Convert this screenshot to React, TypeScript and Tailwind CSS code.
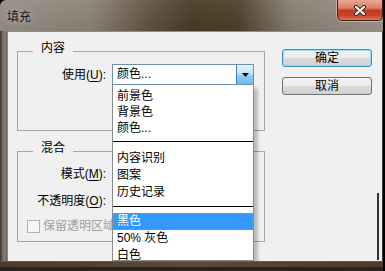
import React from "react";

const menuTop = ["前景色", "背景色", "颜色..."];
const menuMid = ["内容识别", "图案", "历史记录"];

function CloseButton() {
  return (
    <div className="absolute top-0 right-0 w-[46px] h-[21px] rounded-b-[5px] border border-t-0 border-[#4a1e12] shadow-[0_0_0_1px_rgba(255,255,255,0.35)] bg-[linear-gradient(180deg,#e8a898_0%,#dc8068_40%,#c23a1f_52%,#c5442a_78%,#dc7a5c_100%)] flex items-center justify-center">
      <svg width="14" height="11" viewBox="0 0 14 11">
        <path d="M3 2 L11 9 M11 2 L3 9" stroke="#3a2a28" strokeWidth="4.2" strokeLinecap="round" fill="none" />
        <path d="M3 2 L11 9 M11 2 L3 9" stroke="#ffffff" strokeWidth="2.2" strokeLinecap="round" fill="none" />
      </svg>
    </div>
  );
}

function GroupBox({ title, className, children }: { title: string; className: string; children: React.ReactNode }) {
  return (
    <div className={`relative border border-[#a6a6a6] ${className}`}>
      <span className="absolute left-[15px] -top-[12px] px-[8px] bg-[#f0f0f0] leading-[16px]">{title}</span>
      {children}
    </div>
  );
}

function Label({ text, hot }: { text: string; hot: string }) {
  return (
    <span className="w-[88px] text-right leading-[16px] whitespace-nowrap">
      {text}(<span className="underline underline-offset-2">{hot}</span>):
    </span>
  );
}

function DropList() {
  return (
    <div className="absolute top-[21px] left-0 w-[142px] h-[176px] z-10 bg-white border border-t-0 border-[#8a8a8a] shadow-[4px_3px_3px_rgba(0,0,0,0.22)] flex flex-col pt-[3px]">
      {menuTop.map((t) => (
        <div key={t} className="h-[16px] pl-[4px] leading-[16px] shrink-0">{t}</div>
      ))}
      <div className="h-px bg-black mt-[5px] mb-[8px] shrink-0" />
      {menuMid.map((t) => (
        <div key={t} className="h-[17px] pl-[4px] leading-[17px] shrink-0">{t}</div>
      ))}
      <div className="h-px bg-black mt-[5px] mb-[6px] shrink-0" />
      <div className="h-[17px] pl-[3px] leading-[15px] shrink-0 bg-[#3399ff] text-white border border-dotted border-[#c9894a]">黑色</div>
      <div className="h-[17px] pl-[4px] leading-[17px] shrink-0">50% 灰色</div>
      <div className="h-[17px] pl-[4px] leading-[17px] shrink-0">白色</div>
    </div>
  );
}

function Combo() {
  return (
    <div className="relative w-[142px] h-[21px]">
      <div className="w-full h-full flex border border-[#6f8db0] bg-white">
        <span className="flex-1 pl-[4px] leading-[19px]">颜色...</span>
        <div className="w-[17px] h-full border-l border-[#3c7fb1] bg-[linear-gradient(180deg,#e6f5fd_0%,#c4e5f8_45%,#8fcdf2_55%,#6cbbea_100%)] flex items-center justify-center">
          <svg width="7" height="4" viewBox="0 0 7 4">
            <path d="M0 0 H7 L3.5 4 Z" fill="#000" />
          </svg>
        </div>
      </div>
      <DropList />
    </div>
  );
}

function Button({ text, focused }: { text: string; focused?: boolean }) {
  return (
    <div
      className={`h-[18px] rounded-[3px] border flex items-center justify-center leading-[16px] bg-[linear-gradient(180deg,#f3f3f3_0%,#ebebeb_48%,#dcdcdc_52%,#d0d0d0_100%)] ${
        focused ? "border-[#3a93cf] shadow-[inset_0_0_0_1px_#8fdcfb]" : "border-[#707070]"
      }`}
    >
      {text}
    </div>
  );
}

export default function App() {
  return (
    <div className="w-[385px] h-[271px] bg-black overflow-hidden font-['Liberation_Sans','Noto_Sans_CJK_SC',sans-serif] text-[12px] text-black">
      <div className="w-[383px] h-full flex flex-col rounded-tl-[6px] overflow-hidden">
        {/* title bar */}
        <div className="relative h-[31px] shrink-0 bg-[linear-gradient(90deg,#968e84_0%,#8b8276_24%,#5f4f3d_40%,#4a3926_50%,#4f3e2b_62%,#877e72_76%,#9a948c_100%)]">
          <div className="absolute inset-0 bg-[linear-gradient(180deg,rgba(255,255,255,0.06),rgba(0,0,0,0.05))]" />
          <span className="relative block ml-[7px] pt-[10px] leading-[14px] text-[#141420] [text-shadow:0_0_6px_rgba(255,255,255,0.55)]">
            填充
          </span>
          <CloseButton />
        </div>

        <div className="flex flex-1 min-h-0">
          <div className="w-[7px] shrink-0 bg-[linear-gradient(90deg,#3d322a_0%,#6e655b_35%,#8a8378_70%,#5e5850_100%)]" />

          {/* client area */}
          <div className="relative flex-1 bg-[#f0f0f0] border-t border-l border-[#8c8c8c] overflow-hidden flex pl-[9px] pt-[17px]">
            <div className="w-[248px] mt-[2px] flex flex-col">
              <GroupBox title="内容" className="h-[80px] pt-[12px]">
                <div className="flex items-center">
                  <Label text="使用" hot="U" />
                  <div className="ml-[6px]">
                    <Combo />
                  </div>
                </div>
              </GroupBox>

              <GroupBox title="混合" className="h-[91px] mt-[20px] pt-[12px] flex flex-col">
                <div className="h-[20px] flex items-center">
                  <Label text="模式" hot="M" />
                </div>
                <div className="h-[20px] mt-[7px] flex items-center">
                  <Label text="不透明度" hot="O" />
                </div>
                <div className="h-[20px] mt-[5px] flex items-center pl-[9px] text-[#a0a0a0]">
                  <span className="w-[13px] h-[13px] border border-[#b4b4b4] bg-[#f6f6f6]" />
                  <span className="ml-[3px] leading-[16px] whitespace-nowrap">保留透明区域</span>
                </div>
              </GroupBox>
            </div>

            <div className="ml-[17px] w-[90px] flex flex-col gap-[10px]">
              <Button text="确定" focused />
              <Button text="取消" />
            </div>

            <div className="absolute left-[369px] top-[161px] w-[2px] h-[67px] bg-[#333333]" />
          </div>

          <div className="w-px shrink-0 bg-[#3a3a3a]" />
        </div>

        {/* bottom frame */}
        <div className="h-[10px] shrink-0 flex flex-col">
          <div className="h-px bg-[#5a5a5a]" />
          <div className="h-[5px] bg-[linear-gradient(90deg,#4a3b2c,#5a4a38_50%,#4a3b2c)]" />
          <div className="flex-1 bg-[#2a231d]" />
        </div>
      </div>
    </div>
  );
}
